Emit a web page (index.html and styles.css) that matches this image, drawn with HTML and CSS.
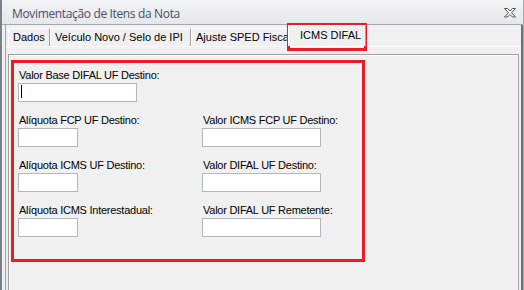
FILE: index.html
```html
<!DOCTYPE html>
<html lang="pt-BR">

<head>
    <meta charset="UTF-8">
    <title>Movimentação de Itens da Nota</title>
    <link rel="stylesheet" href="styles.css">
</head>

<body>
    <div class="window">
        <div class="titlebar">
            <span class="title">Movimentação de Itens da Nota</span>
            <svg class="close" width="12" height="10" viewBox="0 0 12 10">
                <polygon points="0.5,0.5 3.5,0.5 6,3 8.5,0.5 11.5,0.5 7.5,4.75 11.5,9 8.5,9 6,6.5 3.5,9 0.5,9 4.5,4.75"
                    fill="#f7f7f7" stroke="#50555c" stroke-width="1" stroke-linejoin="miter" />
            </svg>
        </div>

        <div class="client">
            <div class="tabctl">
                <div class="tabstrip">
                    <div class="tab tab-dados">Dados</div>
                    <div class="tab tab-veiculo">Veículo Novo / Selo de IPI</div>
                    <div class="tab tab-sped">Ajuste SPED Fiscal</div>
                    <div class="tab active">ICMS DIFAL</div>
                </div>

                <div class="page">
                    <div class="panel">
                        <!-- campos do DIFAL -->
                        <div class="difal">
                            <div class="field wide">
                                <label>Valor Base DIFAL UF Destino:</label>
                                <div class="edit big"><span class="caret"></span></div>
                            </div>
                            <div class="field">
                                <label>Alíquota FCP UF Destino:</label>
                                <div class="edit small"></div>
                            </div>
                            <div class="field">
                                <label>Valor ICMS FCP UF Destino:</label>
                                <div class="edit big"></div>
                            </div>
                            <div class="field">
                                <label>Alíquota ICMS UF Destino:</label>
                                <div class="edit small"></div>
                            </div>
                            <div class="field">
                                <label>Valor DIFAL UF Destino:</label>
                                <div class="edit big"></div>
                            </div>
                            <div class="field">
                                <label>Alíquota ICMS Interestadual:</label>
                                <div class="edit small"></div>
                            </div>
                            <div class="field">
                                <label>Valor DIFAL UF Remetente:</label>
                                <div class="edit big"></div>
                            </div>
                        </div>
                    </div>
                </div>
            </div>
        </div>

        <!-- destaque vermelho da aba -->
        <div class="mark-tab"></div>
    </div>
</body>

</html>
```

FILE: styles.css
```css
* {
    margin: 0;
    padding: 0;
    box-sizing: border-box;
}

body {
    background: #f0f0f0;
    font-family: "Liberation Sans", Arial, sans-serif;
    font-size: 11px;
    color: #000;
}

.window {
    position: relative;
    width: 524px;
    height: 290px;
    overflow: hidden;
    background: #f0f0f0;
    border-left: 2px solid #7b8189;
    border-right: 1px solid #a9adb2;
}

.titlebar {
    height: 25px;
    border-bottom: 1px solid #a4a8ae;
    background: linear-gradient(#f2f4f7, #e4e7eb);
    display: flex;
    align-items: center;
    justify-content: space-between;
    padding: 2px 7px 0 10px;
}

.titlebar .title {
    font-family: "Open Sans", "Noto Sans", sans-serif;
    font-size: 12px;
    letter-spacing: -0.35px;
    color: #4d4b66;
}

.titlebar .close {
    display: block;
    margin-top: -1px;
}

.client {
    height: 265px;
    padding-left: 3px;
    display: flex;
}

.tabctl {
    flex: 1;
    border-left: 1px solid #a0a0a0;
    border-right: 2px solid #6c7176;
    display: flex;
    flex-direction: column;
}

.tabstrip {
    height: 22px;
    padding-left: 2px;
    display: flex;
    align-items: flex-end;
}

.tab {
    height: 18px;
    line-height: 13px;
    padding: 2px 0 0 4px;
    border: 1px solid;
    border-color: #fff #a0a0a0 transparent #fff;
    border-bottom: 0;
    white-space: nowrap;
    overflow: hidden;
    background: #f0f0f0;
}

.tab-dados {
    width: 42px;
}

.tab-veiculo {
    width: 141px;
}

.tab-sped {
    width: 106px;
}

.tab.active {
    position: relative;
    z-index: 1;
    width: 78px;
    height: 21px;
    margin-left: -9px;
    padding: 3px 0 0 11px;
}

.page {
    flex: 1;
    border-top: 1px solid #fff;
    padding: 7px 2px 0;
}

.panel {
    height: 240px;
    border: 1px solid #a0a0a0;
    border-bottom: 0;
    box-shadow: inset 1px 1px 0 #fff;
    padding: 5px 0 0 2px;
}

.difal {
    width: 354px;
    height: 202px;
    border: 3px solid #ec1c24;
    padding: 6px 0 0 4px;
    display: grid;
    grid-template-columns: 184px 1fr;
    grid-auto-rows: 33px;
    row-gap: 12px;
}

.field.wide {
    grid-column: 1 / 3;
}

.field label {
    display: block;
    height: 13px;
    line-height: 13px;
    margin-bottom: 1px;
    padding-left: 1px;
    letter-spacing: -0.25px;
    white-space: nowrap;
}

.edit {
    height: 19px;
    background: #fff;
    border: 1px solid #b3b8bf;
}

.edit.big {
    width: 119px;
}

.edit.small {
    width: 60px;
}

.edit .caret {
    display: block;
    width: 1px;
    height: 13px;
    margin: 1px 0 0 2px;
    background: #000;
}

/* moldura vermelha em volta da aba */
.mark-tab {
    position: absolute;
    left: 285px;
    top: 23px;
    width: 80px;
    height: 28px;
    border: 3px solid #ec1c24;
}
```
